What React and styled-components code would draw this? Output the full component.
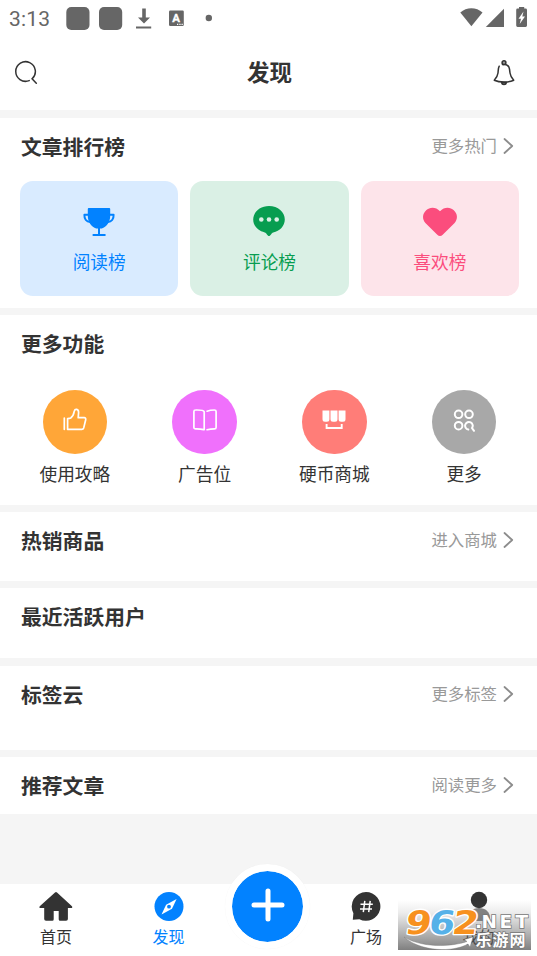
import React from 'react';
import styled, { createGlobalStyle } from 'styled-components';

const colors = {
  blue: '#0282ff',
  green: '#079d50',
  pink: '#fb4d7d',
  dark: '#333333',
  grey: '#999999',
  status: '#666666',
  page: '#f5f5f5',
};

const GlobalStyle = createGlobalStyle`
  * {
    box-sizing: border-box;
  }

  body {
    margin: 0;
    background: ${colors.page};
    color: ${colors.dark};
    font-family: 'Noto Sans CJK SC', sans-serif;
  }

  svg {
    display: block;
    flex: none;
  }
`;

const Page = styled.div`
  display: flex;
  flex-direction: column;
  width: 537px;
  height: 956px;
  overflow: hidden;
`;

const StatusBar = styled.div`
  display: flex;
  align-items: center;
  justify-content: space-between;
  height: 36px;
  padding: 0 10px 0 9px;
  background: #fff;
  color: ${colors.status};
`;

const Clock = styled.span`
  width: 57px;
  padding-top: 1px;
  font: 400 21px/36px Roboto, sans-serif;
  letter-spacing: 0.2px;
`;

const StatusGroup = styled.div`
  display: flex;
  align-items: center;
`;

const Header = styled.header`
  display: grid;
  grid-template-columns: 24px 1fr 24px;
  align-items: center;
  height: 74px;
  padding: 0 21px 0 14px;
  background: #fff;
`;

const HeaderTitle = styled.h1`
  margin: 0;
  padding: 0 0 4px 9px;
  font-size: 22.5px;
  line-height: 30px;
  font-weight: 700;
  text-align: center;
`;

const Section = styled.section`
  flex: none;
  height: ${props => props.$height}px;
  margin-top: ${props => props.$gap}px;
  background: #fff;
`;

const SectionHead = styled.div`
  display: flex;
  align-items: center;
  justify-content: space-between;
  height: 58px;
  padding: 0 23px 2px 21px;
`;

const SectionTitle = styled.h2`
  margin: 0;
  font-size: 20.8px;
  line-height: 30px;
  font-weight: 700;
`;

const MoreLink = styled.div`
  display: flex;
  align-items: center;
  gap: 6px;
  color: ${colors.grey};
  font-size: 16.4px;
  line-height: 22px;
`;

const MoreText = styled.span`
  padding-bottom: 2px;
`;

const RankList = styled.div`
  display: grid;
  grid-template-columns: repeat(3, 1fr);
  gap: 12px;
  padding: 5px 18px 0 20px;
`;

const RankCard = styled.div`
  display: flex;
  flex-direction: column;
  align-items: center;
  gap: 9px;
  height: 114.5px;
  padding-top: 22px;
  border-radius: 13px;
  background: ${props => props.$background};
  color: ${props => props.$color};
  font-size: 17.7px;
  line-height: 26px;
`;

const FeatureList = styled.div`
  display: grid;
  grid-template-columns: repeat(4, 1fr);
  padding: 16.5px 8px 0 10px;
`;

const Feature = styled.div`
  display: flex;
  flex-direction: column;
  align-items: center;
  gap: 6px;
  font-size: 17.7px;
  line-height: 26px;
`;

const FeatureIcon = styled.div`
  display: flex;
  align-items: center;
  justify-content: center;
  width: 64.5px;
  height: 64.5px;
  padding-bottom: 4px;
  border-radius: 50%;
  background: ${props => props.$color};
`;

const TabBar = styled.nav`
  position: relative;
  display: grid;
  grid-template-columns: 112px 113px 85px 112px 113px;
  height: 72px;
  margin-top: auto;
  background: #fff;
`;

const Tab = styled.div`
  display: flex;
  flex-direction: column;
  align-items: center;
  gap: 1px;
  padding-top: 7px;
  color: ${props => (props.$active ? colors.blue : colors.dark)};
  font-size: 16px;
  line-height: 24px;
`;

const AddButton = styled.div`
  display: flex;
  align-items: center;
  justify-content: center;
  width: 85px;
  height: 85px;
  margin-top: -20.5px;
  padding-bottom: 3px;
  border: 7.5px solid #fff;
  border-radius: 50%;
  background: ${colors.blue};
  background-clip: padding-box;
  box-shadow: 0 0 1px rgba(0, 0, 0, 0.06);
`;

const Watermark = styled.div`
  position: absolute;
  right: 6px;
  bottom: 6px;
`;

const SearchIcon = () => (
  <svg width="24" height="26" viewBox="0 0 24 26" fill="none" stroke={colors.dark} strokeWidth="1.5" strokeLinecap="round">
    <path d="M15.2 20.6A9.8 9.8 0 1 1 18.1 18.8L22.3 23.2" />
  </svg>
);

const BellIcon = () => (
  <svg width="24" height="26" viewBox="0 0 24 26" fill="none" stroke={colors.dark} strokeWidth="1.5" strokeLinecap="round" strokeLinejoin="round">
    <path d="M7.2 6.200C6.200 8 6.300 10 6 13c-.3 3-1.600 4.700-3.700 7.200 2.700 1.300 6 1.900 9.700 1.900s7-.6 9.700-1.900C19.600 17.700 18.300 16 18 13c-.4-4.700-.5-8.400-6-8.800-.6 0-1 .1-1.400.2" />
    <circle cx="12" cy="2.700" r="1.900" fill="#999" />
    <path d="M9.500 22.500c.6 2.700 4.400 2.700 5 0z" fill="#999" />
  </svg>
);

const Chevron = () => (
  <svg width="11" height="18" viewBox="0 0 11 18" fill="none" stroke="#8c8c8c" strokeWidth="1.8" strokeLinecap="round" strokeLinejoin="round">
    <path d="M1.500 2l7.700 7-7.700 7" />
  </svg>
);

const TrophyIcon = () => (
  <svg width="32" height="36" viewBox="0 0 32 36" fill="none" stroke="currentColor" strokeLinecap="round" strokeLinejoin="round">
    <path d="M5.700 5h20.600q.9 0 .9 1v7c0 6-3.800 11-8.400 12.500h-5.600C8.600 24 4.800 19 4.800 13V6q0-1 .9-1z" fill="currentColor" stroke="none" />
    <path d="M5 11.800H1.400c-.2 4.200 2.100 7 5.700 7.200M27 11.800h3.600c.2 4.200-2.100 7-5.700 7.200" strokeWidth="2" />
    <path d="M16 24v7M10.400 31.900h11.400" strokeWidth="2" />
  </svg>
);

const CommentIcon = () => (
  <svg width="34" height="36" viewBox="0 0 34 36">
    <path fill="currentColor" d="M17 3C8 3 1.200 9 1.200 16.500c0 6.500 5 11.600 11.600 12.900 1.800.4 2.600 3.600 4.200 3.600s2.400-3.200 4.200-3.600c6.600-1.300 11.600-6.400 11.600-12.900C32.800 9 26 3 17 3z" />
    <g fill="#daf0e5">
      <circle cx="9.300" cy="16.500" r="2.300" />
      <circle cx="17" cy="16.500" r="2.300" />
      <circle cx="24.700" cy="16.500" r="2.300" />
    </g>
  </svg>
);

const HeartIcon = () => (
  <svg width="36" height="36" viewBox="0 0 36 36">
    <path fill="currentColor" d="M18 8.300C13.600 3.400 7.400 4.300 4.200 7.200 .3 10.800 0 16 3.400 20l11.900 11.700c1.600 1.600 3.800 1.600 5.400 0L32.600 20c3.400-4 3.100-9.200-.8-12.800C28.600 4.300 22.400 3.400 18 8.300z" />
  </svg>
);

const ThumbIcon = () => (
  <svg width="24" height="24" viewBox="0 0 24 24" fill="none" stroke="#fff" strokeWidth="1.700" strokeLinecap="round" strokeLinejoin="round">
    <path d="M1.300 10v11.300M4.600 10.500v10.800h14.200c1 0 1.600-.5 1.900-1.400l2-8.100c.2-1.200-.3-2.100-1.500-2.100h-6l.4-5.300c0-3.500-3.600-4-4.300-1.200C10.700 6.800 9.600 8.700 7.700 10c-1 .5-2 .5-3.100.5z" />
  </svg>
);

const BookIcon = () => (
  <svg width="24" height="22" viewBox="0 0 24 22" fill="none" stroke="#fff" strokeWidth="1.700" strokeLinecap="round" strokeLinejoin="round">
    <path d="M10.700 20.600c-2.700-.7-5-.9-8.100-.8-1 0-1.700-.5-1.700-1.400V2.500C.9 1.500 1.500 1 2.500 1c3.500-.1 8.200.2 8.700 1.800V20.600M14.100 2.200C16.100 1.400 18.500 1 21.400 1c1 0 1.700.6 1.700 1.500v15.900c0 .9-.7 1.400-1.700 1.400-2.700 0-4.900.3-7.300.9" />
  </svg>
);

const ShopIcon = () => (
  <svg width="24" height="22" viewBox="0 0 24 22" fill="#fff">
    <path d="M.5 1.500h6.900v8.700q0 2.500-2.500 2.500H3Q.5 12.700.5 10.200zM8.500 1.500h7v8.700q0 2.500-2.500 2.500h-2q-2.500 0-2.500-2.500zM16.600 1.500h6.900v8.700q0 2.500-2.500 2.500h-1.900q-2.500 0-2.500-2.500z" />
    <path d="M4.600 15v4h15.100v-4" fill="none" stroke="#fff" strokeWidth="1.900" />
  </svg>
);

const MoreIcon = () => (
  <svg width="22" height="24" viewBox="0 0 22 24" fill="none" stroke="#fff" strokeWidth="2" strokeLinecap="round">
    <circle cx="5.600" cy="6.300" r="3.800" />
    <circle cx="16" cy="6.300" r="3.800" />
    <circle cx="5.600" cy="17.700" r="3.800" />
    <path d="M15.300 21.500a3.800 3.800 0 1 1 3.700-1.500l2 2.800" />
  </svg>
);

const HomeIcon = () => (
  <svg width="34" height="32" viewBox="0 0 34 32">
    <path fill="currentColor" d="M16 1.500q1-1 2 0l14.700 13.400c1.100 1 .7 2.100-.8 2.100h-3v11q0 1.800-1.800 1.800H21q-1.300 0-1.300-1.500V20h-5v8.300q0 1.500-1.300 1.500H7Q5.200 29.800 5.200 28V17H1.700C.2 17 0 15.800 1 14.900z" />
  </svg>
);

const CompassIcon = () => (
  <svg width="30" height="32" viewBox="0 0 30 32">
    <circle cx="15" cy="15.500" r="14.500" fill="currentColor" />
    <path fill="#fff" d="M22.600 8L18 17.800 7.500 23.400 12.100 13.700z" />
    <circle cx="15" cy="15.700" r="1.900" fill="currentColor" />
  </svg>
);

const SquareIcon = () => (
  <svg width="30" height="32" viewBox="0 0 30 32">
    <path fill="currentColor" d="M15 1A14.400 14.400 0 1 1 8.400 28.200L1.800 28.700 2.400 22.300A14.500 14.500 0 0 1 15 1z" />
    <path d="M13.800 9.800l-1.500 11.400M19.200 9.800l-1.500 11.400M9.500 13.200h12.300M9 18h12" fill="none" stroke="#fff" strokeWidth="1.500" />
  </svg>
);

const UserIcon = () => (
  <svg width="32" height="32" viewBox="0 0 32 32" fill="currentColor">
    <circle cx="16" cy="9" r="8.200" />
    <path d="M5 30v-3c0-6 4.500-10 11-10s11 4 11 10v3z" opacity="0.600" />
  </svg>
);

const StatusIcons = () => (
  <svg width="150" height="26" viewBox="66 5 150 26" fill="currentColor">
    <rect x="66.300" y="7" width="23.200" height="23" rx="5" />
    <rect x="99" y="7" width="23.200" height="23" rx="5" />
    <path d="M142.200 8.500h3.600v9h4.200l-6 6-6-6h4.200zM136 26.500h15.200v2H136z" />
    <rect x="169" y="10.500" width="14.800" height="15.500" rx="1.200" />
    <text x="172.200" y="22.300" fill="#fff" stroke="#fff" strokeWidth="0.300" fontFamily="Roboto" fontSize="11.500" fontWeight="700">A</text>
    <path d="M177 23.700h1.300V25H177zM179.300 23.700h1.300V25h-1.300zM181.500 23.700h1.300V25h-1.300z" fill="#fff" />
    <circle cx="208.800" cy="18" r="3.200" />
  </svg>
);

const SignalIcons = () => (
  <svg width="68" height="24" viewBox="459 6 68 24" fill="currentColor">
    <path d="M460.300 12.500C466.500 6.800 476.300 6.800 482.500 12.500L471.400 26.300z" />
    <path d="M504 8.800V27h-18.200z" />
    <path d="M519 7h5.200v1.500h1.400q1.400 0 1.400 1.400v15.600q0 1.400-1.400 1.400h-8q-1.400 0-1.400-1.400V9.900q0-1.400 1.400-1.400h1.400z" />
    <path d="M523.500 11.500l-5 7.200h2.500l-1.300 5.300 5.300-7.500h-2.700z" fill="#fff" />
  </svg>
);

const PlusIcon = () => (
  <svg width="34" height="34" viewBox="0 0 34 34" stroke="#fff" strokeWidth="5" strokeLinecap="round">
    <path d="M17 3v28M3 17h28" />
  </svg>
);

const SiteLogo = () => (
  <svg width="133" height="56" viewBox="398 894 133 56">
    <defs>
      <linearGradient id="shade" x1="0" y1="0" x2="0" y2="1">
        <stop offset="0" stopColor="#666" stopOpacity="0" />
        <stop offset="0.250" stopColor="#666" stopOpacity="0.120" />
        <stop offset="1" stopColor="#555" stopOpacity="0.750" />
      </linearGradient>
    </defs>
    <rect x="398" y="900" width="133" height="50" fill="url(#shade)" />
    <path d="M404 937C422 948 451 947 467 941.500L464.500 939.500 473 937 470 947 468 944C453 952.500 421 952 404 937z" fill="#fff" stroke="#777" strokeWidth="0.400" />
    <g fontFamily="DejaVu Sans" fontWeight="700" fontSize="32.500" stroke="#fff" strokeWidth="2.600" paintOrder="stroke" strokeLinejoin="round" transform="translate(405 933.500) skewX(-9)">
      <text x="-1" y="0" fill="#f7911e" textLength="26" lengthAdjust="spacingAndGlyphs">9</text>
      <text x="22.500" y="0" fill="#55b1e8" textLength="26" lengthAdjust="spacingAndGlyphs">6</text>
      <text x="46" y="0" fill="#f7911e" textLength="26" lengthAdjust="spacingAndGlyphs">2</text>
    </g>
    <g fill="#fff" stroke="#777" strokeWidth="1.500" paintOrder="stroke" fontWeight="700">
      <text x="475 481.500 499.500 515.500" y="928" stroke="#777" fontFamily="DejaVu Sans" fontSize="18.500">.NET</text>
      <text x="475.500" y="945.500" fontFamily="Noto Sans CJK SC" fontSize="16" textLength="50">乐游网</text>
    </g>
  </svg>
);

const ranks = [
  { label: '阅读榜', icon: <TrophyIcon />, color: colors.blue, background: '#d9ebff' },
  { label: '评论榜', icon: <CommentIcon />, color: colors.green, background: '#daf0e5' },
  { label: '喜欢榜', icon: <HeartIcon />, color: colors.pink, background: '#fde4ea' },
];

const features = [
  { label: '使用攻略', icon: <ThumbIcon />, color: '#ffa638' },
  { label: '广告位', icon: <BookIcon />, color: '#f070fc' },
  { label: '硬币商城', icon: <ShopIcon />, color: '#ff7d78' },
  { label: '更多', icon: <MoreIcon />, color: '#a8a8a8' },
];

const Block = ({ title, more, height, gap, children }) => (
  <Section $height={height} $gap={gap}>
    <SectionHead>
      <SectionTitle>{title}</SectionTitle>
      {more && (
        <MoreLink>
          <MoreText>{more}</MoreText>
          <Chevron />
        </MoreLink>
      )}
    </SectionHead>
    {children}
  </Section>
);

const App = () => (
  <>
    <GlobalStyle />
    <Page>
      <StatusBar>
        <StatusGroup>
          <Clock>3:13</Clock>
          <StatusIcons />
        </StatusGroup>
        <SignalIcons />
      </StatusBar>
      <Header>
        <SearchIcon />
        <HeaderTitle>发现</HeaderTitle>
        <BellIcon />
      </Header>
      <Block title="文章排行榜" more="更多热门" height={190} gap={8}>
        <RankList>
          {ranks.map(({ label, icon, color, background }) => (
            <RankCard key={label} $color={color} $background={background}>
              {icon}
              {label}
            </RankCard>
          ))}
        </RankList>
      </Block>
      <Block title="更多功能" height={190} gap={7}>
        <FeatureList>
          {features.map(({ label, icon, color }) => (
            <Feature key={label}>
              <FeatureIcon $color={color}>{icon}</FeatureIcon>
              {label}
            </Feature>
          ))}
        </FeatureList>
      </Block>
      <Block title="热销商品" more="进入商城" height={69} gap={7} />
      <Block title="最近活跃用户" height={70} gap={7} />
      <Block title="标签云" more="更多标签" height={84} gap={8} />
      <Block title="推荐文章" more="阅读更多" height={57} gap={7} />
      <TabBar>
        <Tab>
          <HomeIcon />
          首页
        </Tab>
        <Tab $active>
          <CompassIcon />
          发现
        </Tab>
        <AddButton>
          <PlusIcon />
        </AddButton>
        <Tab>
          <SquareIcon />
          广场
        </Tab>
        <Tab>
          <UserIcon />
          我的
        </Tab>
        <Watermark>
          <SiteLogo />
        </Watermark>
      </TabBar>
    </Page>
  </>
);

export default App;
